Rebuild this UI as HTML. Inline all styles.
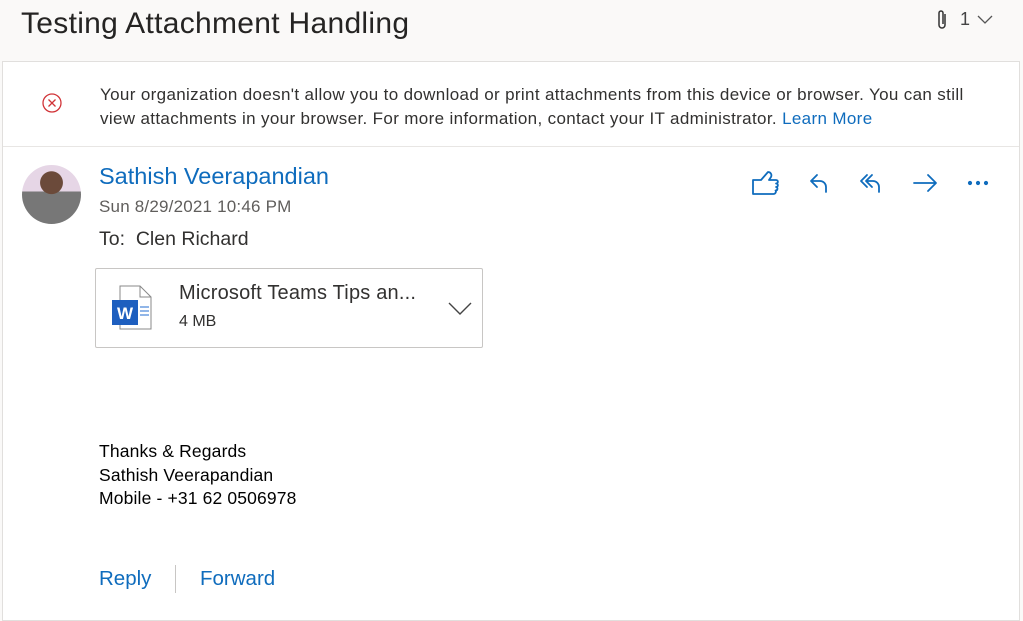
<!DOCTYPE html>
<html><head><meta charset="utf-8"><style>
*{margin:0;padding:0;box-sizing:border-box}
body{width:1023px;height:616px;background:#faf9f8;font-family:"Liberation Sans",sans-serif;color:#201f1e;position:relative;overflow:hidden}
.abs{position:absolute;white-space:nowrap}
.card{position:absolute;left:2px;top:61px;width:1018px;height:560px;background:#fff;border:1px solid #e1dfdd}
.blue{color:#0f6cbd}
</style></head><body>
<div class="abs" style="left:21px;top:7px;font-size:30px;color:#252423;letter-spacing:0.3px">Testing Attachment Handling</div>
<svg class="abs" style="left:934px;top:8px" width="16" height="24" viewBox="0 0 16 24"><path d="M11 6v11a3 3 0 0 1-6 0V5a2 2 0 0 1 4 0v11" fill="none" stroke="#333" stroke-width="1.5"/></svg>
<div class="abs" style="left:960px;top:9px;font-size:18px;color:#444">1</div>
<svg class="abs" style="left:976px;top:14px" width="18" height="12"><path d="M2 2l7 7 7-7" fill="none" stroke="#555" stroke-width="1.3"/></svg>
<div class="card"></div>
<div class="abs" style="left:3px;top:146px;width:1016px;height:1px;background:#e8e6e4"></div>
<svg class="abs" style="left:41px;top:92px" width="22" height="22"><circle cx="11" cy="11" r="9" fill="none" stroke="#d13438" stroke-width="1.3"/><path d="M7.5 7.5l7 7M14.5 7.5l-7 7" stroke="#d13438" stroke-width="1.3"/></svg>
<div class="abs" style="left:100px;top:83px;font-size:17px;line-height:24px;color:#323130;letter-spacing:0.35px">Your organization doesn't allow you to download or print attachments from this device or browser. You can still<br>view attachments in your browser. For more information, contact your IT administrator. <span class="blue">Learn More</span></div>
<div class="abs" style="left:22px;top:165px;width:59px;height:59px;border-radius:50%;background:radial-gradient(circle at 50% 30%,#6b4a3a 0 22%,transparent 23%),linear-gradient(#e6d6e6 0 45%,#777 45%);"></div>
<div class="abs blue" style="left:99px;top:163px;font-size:23.5px">Sathish Veerapandian</div>
<div class="abs" style="left:99px;top:197px;font-size:17px;color:#605e5c;letter-spacing:0.2px">Sun 8/29/2021 10:46 PM</div>
<div class="abs" style="left:99px;top:228px;font-size:19.5px;color:#323130">To:&nbsp; Clen Richard</div>
<svg class="abs" style="left:750px;top:168px" width="250" height="32" viewBox="0 0 250 32" fill="none" stroke="#0f6cbd" stroke-width="1.8" stroke-linejoin="round" stroke-linecap="round">
<path d="M3 12h8l7-8c3 0 4 3 3 5l-2 3h7c2.5 0 2.5 3.5 0 3.5 2.5 0 2.5 3.5 0 3.5 2 0 2 3.5-.5 3.5 1 1 0 3.5-2 3.5H3z"/>
<path d="M67 7l-6 6 6 6M61 13h9a6 6 0 0 1 6 6v5"/>
<path d="M122 7l-6 6 6 6M117 7l-6 6 6 6M116 13h7a6 6 0 0 1 6 6v5"/>
<path d="M164 15h22M178 7l8 8-8 8"/>
<circle cx="220" cy="15" r="1.2" fill="#0f6cbd"/><circle cx="228" cy="15" r="1.2" fill="#0f6cbd"/><circle cx="236" cy="15" r="1.2" fill="#0f6cbd"/>
</svg>
<div class="abs" style="left:95px;top:268px;width:388px;height:80px;border:1px solid #c8c6c4;border-radius:2px"></div>
<svg class="abs" style="left:110px;top:284px" width="44" height="48" viewBox="0 0 44 48"><path d="M10 2h20l11 11v32H10z" fill="#fff" stroke="#888" stroke-width="1"/><path d="M30 2v11h11" fill="none" stroke="#888"/><path d="M30 23h9M30 27h9M30 31h9" stroke="#4f8ad9" stroke-width="1.2"/><rect x="2" y="16" width="26" height="25" fill="#1e5fbf"/><text x="15" y="35" font-family="Liberation Sans" font-weight="bold" font-size="17" fill="#fff" text-anchor="middle">W</text></svg>
<div class="abs" style="left:179px;top:282px;font-size:20px;color:#323130;letter-spacing:0.2px">Microsoft Teams Tips an...</div>
<div class="abs" style="left:179px;top:313px;font-size:16px;color:#323130">4 MB</div>
<svg class="abs" style="left:448px;top:302px" width="24" height="14"><path d="M1 1l11 11L23 1" fill="none" stroke="#444" stroke-width="1.4"/></svg>
<div class="abs" style="left:99px;top:440px;font-size:17.5px;line-height:23.5px;color:#000;letter-spacing:0.15px">Thanks &amp; Regards<br>Sathish Veerapandian<br>Mobile - +31 62 0506978</div>
<div class="abs blue" style="left:99px;top:567px;font-size:20.5px">Reply</div>
<div class="abs" style="left:175px;top:565px;width:1px;height:28px;background:#c8c6c4"></div>
<div class="abs blue" style="left:200px;top:567px;font-size:20.5px">Forward</div>
</body></html>
